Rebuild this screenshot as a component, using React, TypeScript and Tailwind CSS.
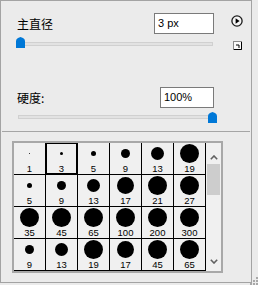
import React from 'react';

const brushes = [
  1, 3, 5, 9, 13, 19,
  5, 9, 13, 17, 21, 27,
  35, 45, 65, 100, 200, 300,
  9, 13, 19, 17, 45, 65,
];

const num = "font-['Liberation_Sans',Arial,sans-serif]";
const cjk = "font-['Noto_Sans_CJK_SC','Noto_Sans',sans-serif]";

const Thumb: React.FC = () => (
  <svg width="9" height="11" viewBox="0 0 9 11">
    <path d="M0 4 Q0 2 2 1 L4.5 0 L7 1 Q9 2 9 4 V11 H0 Z" fill="#0078d7" />
  </svg>
);

const Slider: React.FC<{ pos: number; trackTop: string; thumbLeft: string }> = ({ trackTop, thumbLeft }) => (
  <div className="relative h-[11px]">
    <div className={`absolute left-[1px] right-[1px] h-[4px] bg-[#e2e2e2] border border-[#d0d0d0] ${trackTop}`} />
    <div className={`absolute top-0 ${thumbLeft}`}>
      <Thumb />
    </div>
  </div>
);

const Chevron: React.FC<{ down?: boolean }> = ({ down }) => (
  <svg width="8" height="5" viewBox="0 0 8 5">
    <path
      d={down ? 'M0.8 0.8 L4 4 L7.2 0.8' : 'M0.8 4.2 L4 1 L7.2 4.2'}
      fill="none"
      stroke="#606060"
      strokeWidth="1.6"
    />
  </svg>
);

const App: React.FC = () => {
  return (
    <div className="relative w-[258px] h-[285px] bg-[#ebebeb]">
      <div className="w-[252px] h-[283px] border border-[#a3a3a3] flex flex-col">
        <div className="flex pt-[12px] pl-[16px]">
          <div className="w-[197px] flex flex-col">
            <div className="h-[21px] flex items-center justify-between">
              <span className={`${cjk} text-[12px] leading-none text-black`}>主直径</span>
              <div className={`${num} w-[60px] h-[21px] border border-[#7a7a7a] bg-white pl-[3px] flex items-center text-[11px] text-black`}>
                3 px
              </div>
            </div>
            <div className="mt-[3px]">
              <Slider pos={0} trackTop="top-[5px]" thumbLeft="left-[-1px]" />
            </div>

            <div className="mt-[39px] h-[21px] flex items-center justify-between">
              <span className={`${cjk} text-[12px] leading-none text-black`}>硬度:</span>
              <div className={`${num} w-[54px] h-[21px] border border-[#7a7a7a] bg-white pl-[3px] flex items-center text-[11px] text-black`}>
                100%
              </div>
            </div>
            <div className="mt-[4px]">
              <Slider pos={100} trackTop="top-[3px]" thumbLeft="left-[191px]" />
            </div>
          </div>

          <div className="ml-[17px] flex flex-col items-center">
            <svg className="mt-[2px]" width="12" height="12" viewBox="0 0 12 12">
              <circle cx="6" cy="6" r="5.1" fill="#f6f6f6" stroke="#1a1a1a" strokeWidth="1.3" />
              <path d="M4.6 3.2 L8.6 6 L4.6 8.8 Z" fill="#000" />
            </svg>
            <svg className="mt-[14px]" width="9" height="9" viewBox="0 0 9 9">
              <rect x="0.5" y="0.5" width="8" height="8" fill="#fafafa" stroke="#8a8a8a" />
              <path d="M8.5 1 V8.5 H1" fill="none" stroke="#000" />
              <path d="M3 4 H6 V7" fill="none" stroke="#000" />
            </svg>
          </div>
        </div>

        <div className="mt-[8px] h-px bg-[#a5a5a5] mx-px" />

        <div className="mt-[9px] ml-[11px] w-[211px] border-2 border-[#a8a8a8] flex">
          <div className="grid grid-cols-[repeat(6,31px)] grid-rows-[repeat(4,31px)] gap-px bg-black pr-px pb-px">
            {brushes.map((size, i) => {
              const d = Math.min(size, 19);
              return (
                <div
                  key={i}
                  className={`bg-[#f0f0f0] flex flex-col items-center ${i === 1 ? 'shadow-[inset_0_0_0_1px_#000]' : ''}`}
                >
                  <div className="h-[20px] w-full flex items-center justify-center">
                    <div className="bg-black rounded-full" style={{ width: d, height: d }} />
                  </div>
                  <div className={`${num} h-[11px] leading-[11px] text-[9.5px] text-black`}>{size}</div>
                </div>
              );
            })}
          </div>
          <div className="w-[15px] bg-[#f0f0f0] flex flex-col">
            <div className="h-[21px] flex justify-center">
              <div className="mt-[12px] h-[5px]">
                <Chevron />
              </div>
            </div>
            <div className="h-[31px] w-[13px] ml-[1px] bg-[#cdcdcd]" />
            <div className="flex-1" />
            <div className="h-[21px] flex justify-center">
              <div className="mt-[9px] h-[5px]">
                <Chevron down />
              </div>
            </div>
          </div>
        </div>
      </div>

      <svg className="absolute right-0 bottom-0" width="8" height="8" viewBox="0 0 8 8">
        <rect x="6" y="0" width="2" height="2" fill="#a8a8a8" />
        <rect x="6" y="3" width="2" height="2" fill="#a8a8a8" />
        <rect x="3" y="3" width="2" height="2" fill="#a8a8a8" />
        <rect x="6" y="6" width="2" height="2" fill="#a8a8a8" />
        <rect x="3" y="6" width="2" height="2" fill="#a8a8a8" />
        <rect x="0" y="6" width="2" height="2" fill="#a8a8a8" />
      </svg>
    </div>
  );
};

export default App;
